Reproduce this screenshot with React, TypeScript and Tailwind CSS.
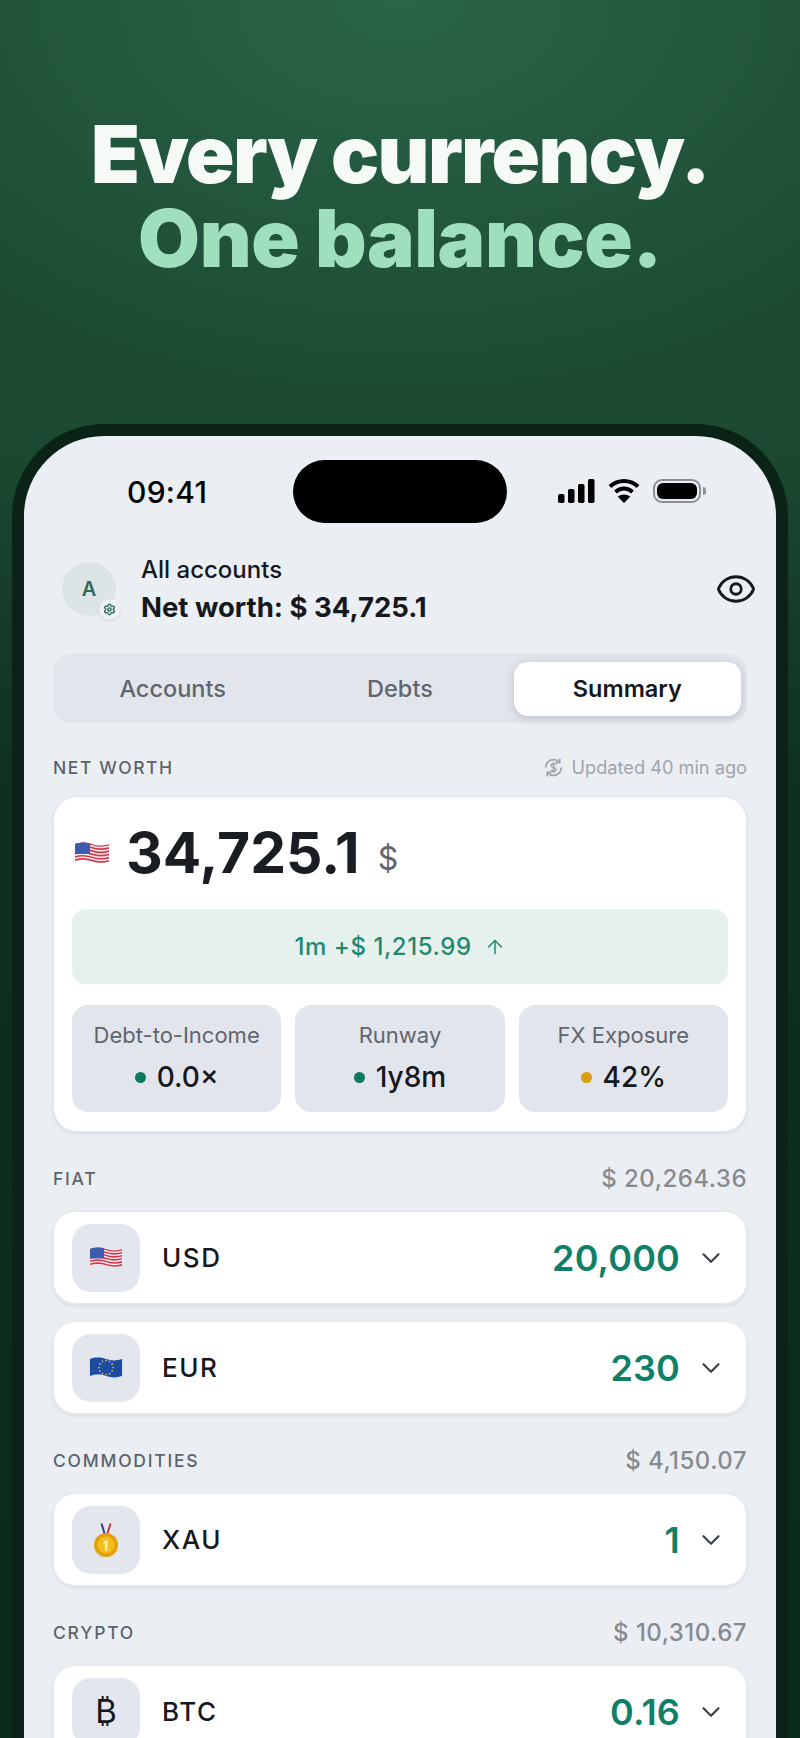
import { ChevronDown, ArrowUp, Eye, Settings } from 'lucide-react';
import type { ReactNode } from 'react';

function UsFlag({ className }: { className?: string }) {
    const stripes = [0, 1, 2, 3, 4, 5, 6];
    return (
        <svg viewBox="0 0 36 26" className={className}>
            <defs>
                <clipPath id="flag-clip">
                    <path d="M1 4c6-2 11-2 17 0s11 2 17 0v18c-6 2-11 2-17 0s-11-2-17 0z" />
                </clipPath>
            </defs>
            <g clipPath="url(#flag-clip)">
                <rect width="36" height="26" fill="#f4f4f6" />
                {stripes.map(i => (
                    <path key={i} d={`M0 ${3.6 + i * 3.2}c6-2 12-2 18 0s12 2 18 0v1.7c-6 2-12 2-18 0s-12-2-18 0z`} fill="#d8354a" />
                ))}
                <rect x="0" y="0" width="16" height="14" fill="#3b5cb0" />
            </g>
        </svg>
    );
}

function EuFlag({ className }: { className?: string }) {
    const stars = Array.from({ length: 12 }, (_, i) => i * 30);
    return (
        <svg viewBox="0 0 36 26" className={className}>
            <path d="M1 4c6-2 11-2 17 0s11 2 17 0v18c-6 2-11 2-17 0s-11-2-17 0z" fill="#1d4ba0" />
            {stars.map(a => (
                <circle key={a} cx={18 + 7.5 * Math.cos(a * Math.PI / 180)} cy={13 + 7.5 * Math.sin(a * Math.PI / 180)} r="0.9" fill="#e8c23a" />
            ))}
        </svg>
    );
}

function Medal({ className }: { className?: string }) {
    return (
        <svg viewBox="0 0 24 34" className={className}>
            <path d="M6.500 0.500l3.500 11.500h2L8.500 0.500z" fill="#2b3f9a" />
            <path d="M17.500 0.500L14 12h-2l3.500-11.500z" fill="#c8323f" />
            <circle cx="12" cy="22" r="12" fill="#dfa10d" />
            <circle cx="12" cy="22" r="8.500" fill="#f5bf1a" />
            <path d="M10 18l3.500-1.500V28h-2.700v-7.500l-1.600.6z" fill="#fbe9a8" />
        </svg>
    );
}

function StatusIcons() {
    return (
        <div className="flex items-center">
            <svg width="37" height="24" viewBox="0 0 37 24" fill="#000">
                <rect x="0" y="15" width="6.5" height="9" rx="1.8" />
                <rect x="10" y="10" width="6.5" height="14" rx="1.8" />
                <rect x="20" y="5" width="6.5" height="19" rx="1.8" />
                <rect x="30" y="0" width="6.5" height="24" rx="1.8" />
            </svg>
            <svg className="ml-[13px]" width="32" height="25" viewBox="0 0 32 25">
                <path d="M2 8.5C10 1 22 1 30 8.5" stroke="#000" strokeWidth="4" fill="none" />
                <path d="M7.5 14c5-4.6 12-4.6 17 0" stroke="#000" strokeWidth="4" fill="none" />
                <path d="M16 25l-6.200-6.300c3.600-2.800 8.800-2.800 12.400 0z" fill="#000" />
            </svg>
            <div className="ml-[13px] flex items-center">
                <div className="flex h-6 w-12 items-center justify-center rounded-[9px] border-2 border-[#8d8f93] p-[2px]">
                    <div className="h-full w-full rounded-[6px] bg-black" />
                </div>
                <div className="ml-[2px] h-2 w-[3px] rounded-r-sm bg-[#8d8f93]" />
            </div>
        </div>
    );
}

function Section({ title, right, children }: { title: string; right: string; children: ReactNode }) {
    return (
        <section className="mt-[29px]">
            <div className="flex h-[36px] items-center justify-between">
                <span className="text-[17.5px] font-medium tracking-[0.1em] text-[#5c636c]">{title}</span>
                <span className="text-[24px] font-medium tracking-[0.02em] text-[#868b92]">{right}</span>
            </div>
            <div className="mt-[14px] flex flex-col gap-[17px]">{children}</div>
        </section>
    );
}

function Row({ icon, code, amount }: { icon: ReactNode; code: string; amount: string }) {
    return (
        <div className="flex h-[93px] items-center rounded-[22px] border border-[#e6e9ee] bg-white pr-[20px] pl-[18px] shadow-[0_2px_4px_rgba(30,40,50,0.08)]">
            <div className="flex h-[68px] w-[68px] items-center justify-center rounded-[19px] bg-[#e3e6ec]">{icon}</div>
            <span className="ml-[22px] text-[26px] font-medium tracking-[0.06em] text-[#15181c]">{code}</span>
            <span className="ml-auto text-[36px] font-semibold tracking-[0.005em] text-[#0f8068]">{amount}</span>
            <ChevronDown className="ml-[16px] h-[30px] w-[30px] text-[#3a4048]" strokeWidth={1.7} />
        </div>
    );
}

function Stat({ label, value, dot }: { label: string; value: string; dot: string }) {
    return (
        <div className="flex h-[107px] flex-col items-center rounded-[16px] bg-[#e2e5eb] pt-[14px]">
            <span className="text-[22px] text-[#5f666f]">{label}</span>
            <div className="mt-[4px] flex items-center gap-[11px]">
                <span className={`h-[11px] w-[11px] rounded-full ${dot}`} />
                <span className="text-[28px] font-medium text-[#15181c]">{value}</span>
            </div>
        </div>
    );
}

export default function App() {
    return (
        <div className="h-[1738px] w-[800px] overflow-hidden bg-[radial-gradient(ellipse_620px_400px_at_50%_0%,#2a6549_0%,#1c4a33_100%),linear-gradient(#1c4a33,#1c4a33)] font-['Inter',sans-serif]">
            <div className="bg-[linear-gradient(180deg,transparent_0px,transparent_424px,#0f2f20_800px,#0c2a1b_1738px)]">
                <h1 className="pt-[112px] text-center text-[80px] leading-[84px] font-black text-[#f6faf7]">
                    <span className="tracking-[-0.02em]">Every currency.</span>
                    <br />
                    <span className="tracking-[-0.005em] text-[#9fdfbd]">One balance.</span>
                </h1>

                <div className="mx-[12px] mt-[144px] h-[1400px] rounded-t-[92px] bg-[#0a2316] px-[12px] pt-[12px]">
                    <div className="h-full rounded-t-[80px] bg-[#ebeff3] px-[29px]">
                        {/* status bar */}
                        <div className="flex h-[87px] items-end justify-between">
                            <span className="mb-[13px] ml-[74px] text-[30px] leading-[36px] font-medium tracking-[0.01em] text-black">09:41</span>
                            <div className="absolute left-[293px] top-[460px] h-[63px] w-[214px] rounded-full bg-black" />
                            <div className="mb-[20px] mr-[41px]"><StatusIcons /></div>
                        </div>

                        {/* account header */}
                        <div className="mt-[32px] flex items-center">
                            <div className="relative ml-[9px] flex h-[54px] w-[54px] items-center justify-center rounded-full bg-[#dde4e5] text-[20px] font-semibold text-[#2d6a56]">
                                A
                                <div className="absolute -right-[4px] -bottom-[4px] flex h-[21px] w-[21px] items-center justify-center rounded-full bg-[#eef1f4] shadow-sm">
                                    <Settings className="h-[13px] w-[13px] text-[#2d6a56]" strokeWidth={2.6} />
                                </div>
                            </div>
                            <div className="ml-[25px]">
                                <div className="text-[24px] leading-[30px] font-medium text-[#15181c]">All accounts</div>
                                <div className="mt-[6px] text-[27.5px] leading-[32px] font-bold text-[#15181c]">Net worth: $ 34,725.1</div>
                            </div>
                            <Eye className="ml-auto mr-[-10px] h-[42px] w-[42px] text-[#15181c]" strokeWidth={1.6} />
                        </div>

                        {/* tabs */}
                        <div className="mt-[31px] grid h-[69px] grid-cols-3 items-center rounded-[18px] bg-[#e2e5eb] px-[6px]">
                            <span className="text-center text-[23.5px] font-medium text-[#60666f]">Accounts</span>
                            <span className="text-center text-[23.5px] font-medium text-[#60666f]">Debts</span>
                            <span className="flex h-[54px] items-center justify-center rounded-[14px] bg-white text-[23.5px] font-semibold text-[#15181c] shadow-[0_2px_8px_rgba(30,40,50,0.2)]">Summary</span>
                        </div>

                        {/* net worth */}
                        <div className="mt-[27px] flex h-[36px] items-center justify-between">
                            <span className="text-[17.5px] font-medium tracking-[0.09em] text-[#5c636c]">NET WORTH</span>
                            <span className="flex items-center gap-[7px] text-[18.2px] text-[#a0a5ab]">
                                <svg width="23" height="23" viewBox="0 0 24 24" fill="none" stroke="#a0a5ab" strokeWidth="1.8">
                                    <path d="M4 12a8 8 0 0 1 14-5.500M20 12a8 8 0 0 1-14 5.500" />
                                    <path d="M18.500 2.500v4.500H14M5.500 21.500V17H10" />
                                    <path d="M14.500 9.500c-.5-1-1.500-1.500-2.500-1.500-1.500 0-2.500.8-2.500 2s1 1.700 2.500 2 2.500.8 2.500 2-1 2-2.500 2c-1 0-2-.5-2.500-1.500M12 6.500v11" strokeWidth="1.500" />
                                </svg>
                                Updated 40 min ago
                            </span>
                        </div>
                        <div className="mt-[10px] h-[336px] rounded-[24px] border border-[#e2e6ea] bg-white px-[18px] pt-[22px] shadow-[0_2px_4px_rgba(30,40,50,0.08)]">
                            <div className="flex h-[68px] items-center">
                                <UsFlag className="ml-[2px] h-[28px] w-[36px]" />
                                <span className="ml-[16px] text-[57px] leading-[68px] font-bold text-[#1a1d21]">34,725.1</span>
                                <span className="mt-[12px] ml-[18px] text-[32px] text-[#60666f]">$</span>
                            </div>
                            <div className="mt-[22px] flex h-[75px] items-center justify-center gap-[12px] rounded-[14px] bg-[#e6f1ee] text-[24px] font-medium tracking-[0.024em] text-[#1f8a70]">
                                1m +$ 1,215.99
                                <ArrowUp className="h-[22px] w-[22px]" strokeWidth={1.6} />
                            </div>
                            <div className="mt-[21px] grid grid-cols-3 gap-[14px]">
                                <Stat label="Debt-to-Income" value="0.0×" dot="bg-[#0f7a62]" />
                                <Stat label="Runway" value="1y8m" dot="bg-[#0f7a62]" />
                                <Stat label="FX Exposure" value="42%" dot="bg-[#d69e12]" />
                            </div>
                        </div>

                        <Section title="FIAT" right="$ 20,264.36">
                            <Row icon={<UsFlag className="h-[29px] w-[34px]" />} code="USD" amount="20,000" />
                            <Row icon={<EuFlag className="h-[29px] w-[34px]" />} code="EUR" amount="230" />
                        </Section>
                        <Section title="COMMODITIES" right="$ 4,150.07">
                            <Row icon={<Medal className="h-[34px] w-[24px]" />} code="XAU" amount="1" />
                        </Section>
                        <Section title="CRYPTO" right="$ 10,310.67">
                            <Row icon={<span className="text-[33px] text-[#15181c]">₿</span>} code="BTC" amount="0.16" />
                        </Section>
                    </div>
                </div>
            </div>
        </div>
    );
}
